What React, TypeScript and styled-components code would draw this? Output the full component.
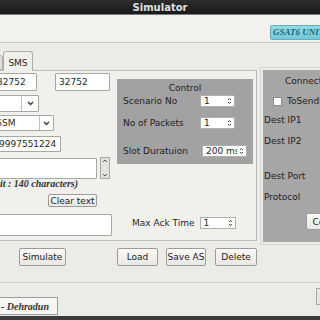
import styled, { createGlobalStyle } from "styled-components";

const Global = createGlobalStyle`
	* { box-sizing: border-box; }
	html, body { margin: 0; padding: 0; }
	body {
		width: 320px;
		height: 320px;
		overflow: hidden;
		background: #3b3b3b;
		font-family: "DejaVu Sans", "Liberation Sans", sans-serif;
		font-size: 9px;
		color: #262a2b;
	}
`;

const Window = styled.div`
	width: 400px;
	height: 316px;
	margin-left: -40px;
	background: #edebe8;
	display: flex;
	flex-direction: column;
`;
const TitleBar = styled.div`
	height: 15px;
	border-bottom: 1px solid #7c7c7c;
	background: linear-gradient(#2d2d2d, #191919);
	color: #e0e0e0;
	font-weight: bold;
	font-size: 10px;
	display: flex;
	align-items: center;
	justify-content: center;
`;
const Header = styled.div`
	height: 28px;
	background: #f3f2ef;
	border-bottom: 1px solid #c9c7c3;
	display: flex;
	justify-content: flex-end;
	padding: 10px 20px 0 0;
`;
const Badge = styled.div`
	width: 70px;
	height: 15px;
	border: 1px solid #5eb0be;
	border-radius: 2px;
	background: linear-gradient(#92dbe6, #74c9d6);
	color: #1d6775;
	font-family: "Liberation Serif", "DejaVu Serif", serif;
	font-style: italic;
	font-weight: bold;
	font-size: 9px;
	line-height: 13px;
	padding-left: 2px;
	white-space: nowrap;
	overflow: hidden;
`;
const Main = styled.div`
	height: 240px;
	border-bottom: 1px solid #cfcdc9;
	display: flex;
	align-items: flex-start;
`;
const TabArea = styled.div`
	width: 297px;
	padding-left: 2px;
	display: flex;
	flex-direction: column;
`;
const TabStrip = styled.div`
	margin-top: 8px;
	height: 19px;
	display: flex;
	align-items: flex-end;
`;
const Tab = styled.div<{ $active?: boolean; $w: number }>`
	width: ${(p) => p.$w}px;
	height: ${(p) => (p.$active ? 20 : 15)}px;
	margin-bottom: ${(p) => (p.$active ? -1 : 0)}px;
	position: relative;
	z-index: ${(p) => (p.$active ? 1 : 0)};
	border: 1px solid #aeaca8;
	border-bottom: ${(p) => (p.$active ? "none" : "1px solid #aeaca8")};
	border-radius: 3px 3px 0 0;
	background: ${(p) => (p.$active ? "#f1f0ed" : "#e2e0dc")};
	display: flex;
	align-items: center;
	justify-content: center;
	padding-top: 2px;
`;
const Pane = styled.div`
	height: 171px;
	border: 1px solid #bdbbb7;
	background: #f1f0ed;
	padding: 2px 3px 0 27px;
	display: flex;
	gap: 5px;
`;
const LeftCol = styled.div`
	width: 122px;
	display: flex;
	flex-direction: column;
`;
const MidCol = styled.div`
	width: 136px;
	display: flex;
	flex-direction: column;
`;
const Row = styled.div<{ $top?: number; $left?: number; $gap?: number }>`
	display: flex;
	align-items: center;
	margin-top: ${(p) => p.$top ?? 0}px;
	margin-left: ${(p) => p.$left ?? 0}px;
	gap: ${(p) => p.$gap ?? 0}px;
`;
const Field = styled.div<{ $w: number; $h: number }>`
	width: ${(p) => p.$w}px;
	height: ${(p) => p.$h}px;
	background: #ffffff;
	border: 1px solid #a9a7a3;
	border-radius: 1px;
	padding-left: 3px;
	display: flex;
	align-items: center;
	white-space: nowrap;
	overflow: hidden;
`;
const Combo = styled.div<{ $w: number; $h: number }>`
	width: ${(p) => p.$w}px;
	height: ${(p) => p.$h}px;
	background: #ffffff;
	border: 1px solid #a9a7a3;
	border-radius: 1px;
	display: flex;
`;
const ComboText = styled.div`
	flex: 1;
	padding-left: 3px;
	display: flex;
	align-items: center;
	overflow: hidden;
`;
const ComboArrow = styled.div<{ $w: number }>`
	width: ${(p) => p.$w}px;
	border-left: 1px solid #c3c1bd;
	display: flex;
	align-items: center;
	justify-content: center;
`;
const Scroll = styled.div`
	width: 10px;
	height: 22px;
	border: 1px solid #a9a7a3;
	background: #e4e2de;
	display: flex;
	flex-direction: column;
	justify-content: space-between;
	align-items: center;
	padding: 1px 0;
`;
const Hint = styled.div`
	height: 10px;
	line-height: 10px;
	padding-right: 34px;
	display: flex;
	justify-content: flex-end;
	white-space: nowrap;
	font-family: "Liberation Serif", "DejaVu Serif", serif;
	font-style: italic;
	font-weight: bold;
	font-size: 10px;
	color: #333;
`;
const Button = styled.div<{ $w: number; $h: number }>`
	width: ${(p) => p.$w}px;
	height: ${(p) => p.$h}px;
	border: 1px solid #9d9b97;
	border-radius: 2px;
	background: linear-gradient(#fbfaf9, #e9e7e4);
	display: flex;
	align-items: center;
	justify-content: center;
	white-space: nowrap;
	overflow: hidden;
	color: #222;
`;
const ControlBox = styled.div`
	margin-top: 6px;
	height: 85px;
	background: #a2a2a2;
	padding: 4px 6px 0;
	display: flex;
	flex-direction: column;
	color: #1f1f1f;
`;
const BoxTitle = styled.div`
	height: 10px;
	line-height: 10px;
	text-align: center;
`;
const Label = styled.div<{ $w?: number }>`
	width: ${(p) => (p.$w ? `${p.$w}px` : "auto")};
	white-space: nowrap;
`;
const Spin = styled.div<{ $w: number }>`
	width: ${(p) => p.$w}px;
	height: 12px;
	background: #ffffff;
	border: 1px solid #b1afab;
	display: flex;
	align-items: center;
	padding-left: 3px;
`;
const SpinText = styled.span`
	flex: 1;
	overflow: hidden;
	white-space: nowrap;
`;
const SpinArrows = styled.span`
	width: 9px;
	display: flex;
	justify-content: center;
`;
const ButtonRow = styled.div`
	margin-top: 7px;
	display: flex;
	height: 18px;
	padding-left: 57px;
`;
const ConnFrame = styled.div`
	margin: 24px 0 0 3px;
	border: 1px solid #d6d4d0;
	padding: 2px;
	flex: 1;
`;
const ConnBox = styled.div`
	height: 172px;
	background: #a6a6a6;
	padding: 6px 0 0 1px;
	display: flex;
	flex-direction: column;
	color: #222;
`;
const Check = styled.span`
	width: 9px;
	height: 9px;
	background: #fafafa;
	border: 1px solid #8e8e8e;
`;
const Footer = styled.div`
	flex: 1;
	display: flex;
	align-items: flex-start;
	justify-content: space-between;
	padding: 0 0 0 20px;
`;
const Place = styled.div`
	margin-top: 14px;
	width: 78px;
	height: 18px;
	border: 1px solid #9d9b97;
	background: #f7f6f4;
	display: flex;
	align-items: center;
	justify-content: flex-end;
	padding-right: 8px;
	white-space: nowrap;
	overflow: hidden;
	font-family: "Liberation Serif", "DejaVu Serif", serif;
	font-style: italic;
	font-weight: bold;
	font-size: 10px;
	color: #333;
`;
const EdgeBox = styled.div`
	margin-top: 5px;
	width: 44px;
	height: 17px;
	border: 1px solid #aaa8a4;
	background: #e8e6e3;
`;

const Chevron = () => (
	<svg width="7" height="5" viewBox="0 0 7 5">
		<path d="M1 1 L3.5 3.5 L6 1" fill="none" stroke="#333" strokeWidth="1.3" />
	</svg>
);
const UpDown = () => (
	<svg width="5" height="8" viewBox="0 0 5 8">
		<path d="M1 3 L2.5 1.5 L4 3 M1 5 L2.5 6.5 L4 5" fill="none" stroke="#444" strokeWidth="1" />
	</svg>
);
const SmallArrow = ({ up }: { up?: boolean }) => (
	<svg width="6" height="4" viewBox="0 0 6 4">
		<path d={up ? "M1 3 L3 1 L5 3" : "M1 1 L3 3 L5 1"} fill="none" stroke="#555" strokeWidth="1" />
	</svg>
);

function Spinner({ w, value }: { w: number; value: string }) {
	return (
		<Spin $w={w}>
			<SpinText>{value}</SpinText>
			<SpinArrows>
				<UpDown />
			</SpinArrows>
		</Spin>
	);
}

export default function App() {
	return (
		<>
			<Global />
			<Window>
				<TitleBar>Simulator</TitleBar>
				<Header>
					<Badge>GSAT6 UNIT</Badge>
				</Header>
				<Main>
					<TabArea>
						<TabStrip>
							<Tab $w={41}>Call</Tab>
							<Tab $w={30} $active>
								SMS
							</Tab>
						</TabStrip>
						<Pane>
							<LeftCol>
								<Row $left={3} $gap={18}>
									<Field $w={44} $h={18}>
										32752
									</Field>
									<Field $w={55} $h={18}>
										32752
									</Field>
								</Row>
								<Row $top={4}>
									<Combo $w={49} $h={17}>
										<ComboText />
										<ComboArrow $w={17}>
											<Chevron />
										</ComboArrow>
									</Combo>
								</Row>
								<Row $top={3} $left={1}>
									<Combo $w={63} $h={16}>
										<ComboText>GSM</ComboText>
										<ComboArrow $w={14}>
											<Chevron />
										</ComboArrow>
									</Combo>
								</Row>
								<Row $top={5} $left={5}>
									<Field $w={66} $h={16}>
										9997551224
									</Field>
								</Row>
								<Row $top={5} $gap={3}>
									<Field $w={107} $h={21} />
									<Scroll>
										<SmallArrow up />
										<SmallArrow />
									</Scroll>
								</Row>
								<Hint>(Max limit : 140 characters)</Hint>
								<Row $top={5} $left={58}>
									<Button $w={49} $h={13}>
										Clear text
									</Button>
								</Row>
								<Row $top={7}>
									<Field $w={122} $h={22} />
								</Row>
							</LeftCol>
							<MidCol>
								<ControlBox>
									<BoxTitle>Control</BoxTitle>
									<Row $top={2}>
										<Label $w={77}>Scenario No</Label>
										<Spinner w={35} value="1" />
									</Row>
									<Row $top={10}>
										<Label $w={77}>No of Packets</Label>
										<Spinner w={35} value="1" />
									</Row>
									<Row $top={16}>
										<Label $w={79}>Slot Duratuion</Label>
										<Spinner w={45} value="200 ms" />
									</Row>
								</ControlBox>
								<Row $top={53} $left={15} $gap={5}>
									<Label>Max Ack Time</Label>
									<Spinner w={36} value="1" />
								</Row>
							</MidCol>
						</Pane>
						<ButtonRow>
							<Button $w={47} $h={18}>
								Simulate
							</Button>
							<Row $left={51} $gap={8}>
								<Button $w={41} $h={18}>
									Load
								</Button>
								<Button $w={40} $h={18}>
									Save AS
								</Button>
								<Button $w={42} $h={18} style={{ marginLeft: 1 }}>
									Delete
								</Button>
							</Row>
						</ButtonRow>
					</TabArea>
					<ConnFrame>
						<ConnBox>
							<BoxTitle>Connection</BoxTitle>
							<Row $top={10} $left={9} $gap={5}>
								<Check />
								<Label>ToSendData</Label>
							</Row>
							<Row $top={9}>
								<Label>Dest IP1</Label>
							</Row>
							<Row $top={11}>
								<Label>Dest IP2</Label>
							</Row>
							<Row $top={25}>
								<Label>Dest Port</Label>
							</Row>
							<Row $top={11}>
								<Label>Protocol</Label>
							</Row>
							<Row $top={11} $left={42}>
								<Button $w={50} $h={17}>
									Connect
								</Button>
							</Row>
						</ConnBox>
					</ConnFrame>
				</Main>
				<Footer>
					<Place>IIRS - Dehradun</Place>
					<EdgeBox />
				</Footer>
			</Window>
		</>
	);
}
